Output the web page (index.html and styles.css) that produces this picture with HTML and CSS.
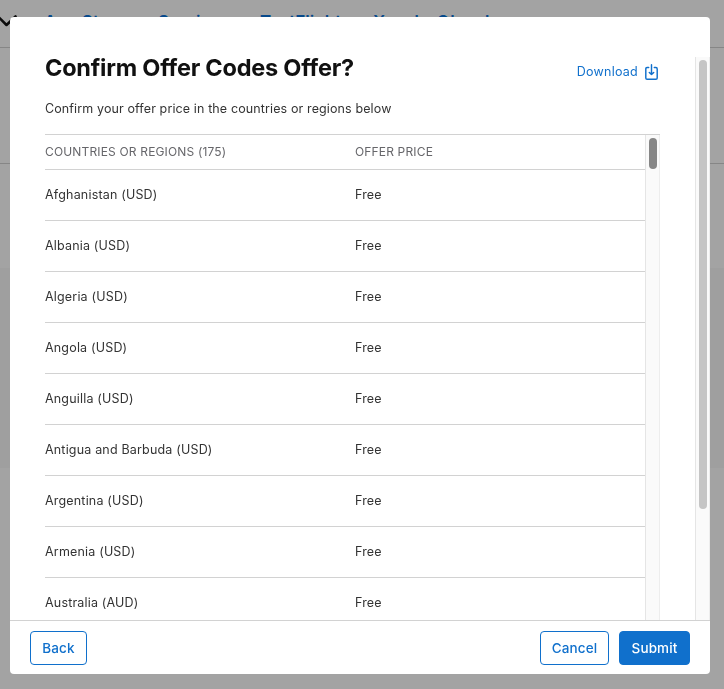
FILE: index.html
```html
<!DOCTYPE html>
<html lang="en">
<head>
<meta charset="utf-8">
<title>Confirm Offer Codes Offer?</title>
<link rel="stylesheet" href="styles.css">
</head>
<body>
<div class="page">
  <header class="topbar">
    <svg class="chevron" width="17" height="14" viewBox="0 0 17 14"><path d="M-2 1.5 L6.5 10 L15.5 1.5" fill="none" stroke="#0c0c0c" stroke-width="2.6" stroke-linecap="round" stroke-linejoin="round"/></svg>
    <nav class="tabs"><a>App Store</a><a>Services</a><a>TestFlight</a><a class="wide">Xcode Cloud</a></nav>
  </header>
  <div class="subbar"></div>
  <div class="gap"></div>
  <div class="band"></div>
</div>
<div class="overlay">
  <section class="modal">
    <div class="modal-body">
      <div class="content">
        <div class="heading">
          <h1>Confirm Offer Codes Offer?</h1>
          <a class="download"><span>Download</span>
            <svg width="14" height="17" viewBox="0 0 14 17" fill="none" stroke="#1070cc" stroke-width="1.45" stroke-linecap="round" stroke-linejoin="round"><path d="M3.7 3.5H2.1Q.8 3.5 .8 4.9V13.9Q.8 15.3 2.1 15.3H10.9Q12.2 15.3 12.2 13.9V4.9Q12.2 3.5 10.9 3.5H9.3M6.5 .8V10.4M4.3 8.4L6.5 10.6L8.7 8.4"/></svg>
          </a>
        </div>
        <p class="intro">Confirm your offer price in the countries or regions below</p>
        <div class="list">
          <div class="rows">
            <div class="row head"><span>COUNTRIES OR REGIONS (175)</span><span>OFFER PRICE</span></div>
            <div class="row"><span>Afghanistan (USD)</span><span>Free</span></div>
            <div class="row"><span>Albania (USD)</span><span>Free</span></div>
            <div class="row"><span>Algeria (USD)</span><span>Free</span></div>
            <div class="row"><span>Angola (USD)</span><span>Free</span></div>
            <div class="row"><span>Anguilla (USD)</span><span>Free</span></div>
            <div class="row"><span>Antigua and Barbuda (USD)</span><span>Free</span></div>
            <div class="row"><span>Argentina (USD)</span><span>Free</span></div>
            <div class="row"><span>Armenia (USD)</span><span>Free</span></div>
            <div class="row"><span>Australia (AUD)</span><span>Free</span></div>
          </div>
          <div class="track"><div class="thumb dark"></div></div>
        </div>
      </div>
      <div class="track"><div class="thumb"></div></div>
    </div>
    <footer class="actions">
      <button class="btn back">Back</button>
      <button class="btn cancel">Cancel</button>
      <button class="btn submit">Submit</button>
    </footer>
  </section>
</div>
</body>
</html>
```
FILE: styles.css
```css
* { box-sizing: border-box; }
body {
  margin: 0;
  height: 689px;
  overflow: hidden;
  background: #a3a3a3;
  color: #333;
  font: 12.5px/20px Inter, "Liberation Sans", sans-serif;
}
.topbar { display: flex; height: 48px; border-bottom: 1px solid #868686; }
.chevron { flex: none; margin: 15px 27px 0 0; }
.tabs {
  display: grid;
  grid-template-columns: 114px 102px 113px 130px;
  padding-top: 12px;
  color: #06498b;
  font-size: 17px;
  font-weight: 600;
  line-height: 20px;
  white-space: nowrap;
}
.wide { letter-spacing: 1.1px; }
.subbar { height: 116px; border-bottom: 1px solid #868686; }
.gap { height: 104px; }
.band { height: 200px; background: #9f9f9f; }
.overlay { position: fixed; inset: 0; padding: 17px 14px 15px 10px; }
.modal {
  display: flex;
  flex-direction: column;
  height: 657px;
  background: #fff;
  border-radius: 4px;
  overflow: hidden;
}
.modal-body { display: flex; height: 603px; padding-top: 40px; }
.content { display: flex; flex-direction: column; flex: 1; padding: 0 35px; }
.heading { display: flex; justify-content: space-between; height: 30px; }
h1 {
  margin: -4px 0 0;
  color: #111;
  font-size: 23.5px;
  line-height: 30px;
  font-weight: 700;
  letter-spacing: -.23px;
  white-space: nowrap;
}
.download { display: flex; gap: 7px; padding: 5px 1px 0 0; color: #1070cc; letter-spacing: .24px; }
.download svg { margin-top: 2px; }
.intro { margin: 12px 0 15px; letter-spacing: .12px; }
.list { display: flex; flex: 1; min-height: 0; border-top: 1px solid #d2d2d2; }
.rows { flex: 1; overflow: hidden; }
.row {
  display: grid;
  grid-template-columns: 310px 1fr;
  align-items: center;
  height: 51px;
  border-bottom: 1px solid #d2d2d2;
  letter-spacing: .18px;
}
.row.head {
  height: 35px;
  color: #66666a;
  font-size: 12px;
  letter-spacing: .16px;
}
.track {
  flex: none;
  width: 15px;
  padding: 3px 3px 0;
  background: #fafafa;
  border-left: 1px solid #e5e5e5;
  border-right: 1px solid #ededed;
}
.thumb { width: 8px; height: 449px; border-radius: 4px; background: #c5c5c5; }
.thumb.dark { height: 31px; background: #868686; }
.actions {
  display: flex;
  height: 54px;
  padding: 10px 20px;
  gap: 10px;
  border-top: 1px solid #d2d2d2;
}
.btn {
  height: 34px;
  padding: 0;
  border: 1px solid #1070cc;
  border-radius: 4px;
  background: #fff;
  color: #1070cc;
  font: 500 13.5px/20px Inter, "Liberation Sans", sans-serif;
  letter-spacing: .1px;
}
.back { width: 57px; margin-right: auto; }
.cancel { width: 69px; }
.submit { width: 71px; background: #1070cc; color: #fff; }
```
